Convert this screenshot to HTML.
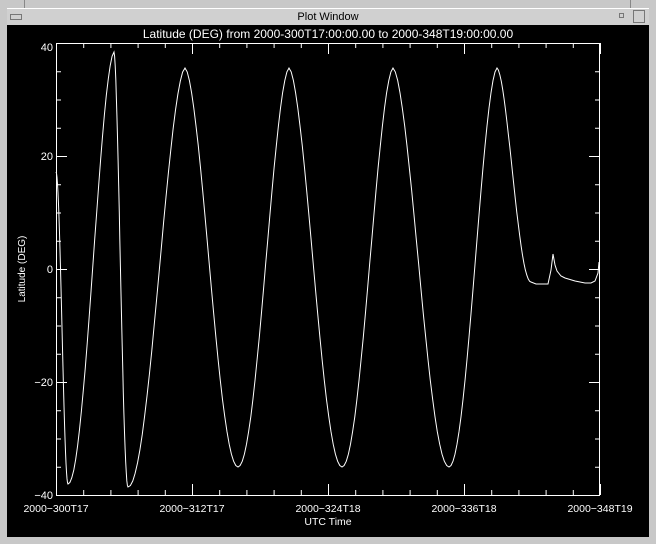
<!DOCTYPE html>
<html><head><meta charset="utf-8"><style>
body{margin:0;width:656px;height:544px;background:#c8c8c8;overflow:hidden;position:relative;font-family:"Liberation Sans",sans-serif}
.black{position:absolute;left:7px;top:25px;width:642px;height:512px;background:#000}
.tb{position:absolute;left:7px;top:8px;width:642px;height:16px;background:#d0d0d0;border-top:1px solid #fff;border-bottom:1px solid #888;font-size:11px;text-align:center;line-height:16px;color:#000}
svg{position:absolute;left:0;top:0}
</style></head><body>
<div class="tb">Plot Window</div>
<div style="position:absolute;left:24px;top:0;width:1px;height:8px;background:#888"></div>
<div style="position:absolute;left:630px;top:0;width:1px;height:8px;background:#888"></div>
<div style="position:absolute;left:10px;top:14px;width:10px;height:4px;border:1px solid #777"></div>
<div style="position:absolute;left:619px;top:13px;width:3px;height:3px;border:1px solid #777"></div>
<div style="position:absolute;left:633px;top:10px;width:10px;height:11px;border:1px solid #777"></div>
<div class="black"></div>
<svg width="656" height="544" id="s" font-family="Liberation Sans, sans-serif" font-size="11" fill="#fff">
<text x="328" y="38" text-anchor="middle" font-size="12">Latitude (DEG) from 2000-300T17:00:00.00 to 2000-348T19:00:00.00</text>
<rect x="56.5" y="43.5" width="543" height="452" fill="none" stroke="#fff"/>
<g id="ticks" stroke="#fff"></g>
<g text-anchor="end">
<text x="53" y="51">40</text><text x="53" y="160">20</text><text x="53" y="273">0</text><text x="53" y="386">−20</text><text x="53" y="499">−40</text>
</g>
<g text-anchor="middle" font-size="10.5">
<text x="56" y="512">2000−300T17</text><text x="192" y="512">2000−312T17</text><text x="328" y="512">2000−324T18</text><text x="464" y="512">2000−336T18</text><text x="600" y="512">2000−348T19</text>
<text x="328" y="525">UTC Time</text>
</g>
<text x="0" y="0" font-size="10" text-anchor="middle" transform="translate(25,269) rotate(-90)">Latitude (DEG)</text>
<path id="c" fill="none" stroke="#fff" stroke-width="1"/>
</svg>
<script>
var t='';
for(var i=0;i<=20;i++){var x=56.5+i*27.2;var L=(i%5==0)?11:5;t+='<line x1="'+x+'" y1="495" x2="'+x+'" y2="'+(495-L)+'"/><line x1="'+x+'" y1="43" x2="'+x+'" y2="'+(43+L)+'"/>';}
for(var j=0;j<=16;j++){var y=43.5+j*28.25;var L=(j%4==0)?11:5;t+='<line x1="56" y1="'+y+'" x2="'+(56+L)+'" y2="'+y+'"/><line x1="600" y1="'+y+'" x2="'+(600-L)+'" y2="'+y+'"/>';}
document.getElementById('ticks').innerHTML=t;
var e=[[56,172],[68,484],[114,52],[128,487],[185,68],[238,467],[289,68],[342,467],[393,68],[449,467],[497,68],[531,282]];
var d='M'+e[0][0]+' '+e[0][1];
for(var k=0;k<e.length-1;k++){var a=e[k],b=e[k+1];for(var s=1;s<=24;s++){var u=s/24;var f=(1-Math.cos(Math.PI*u))/2;
if(b[1]>a[1]&&k>0){f=Math.pow(f,0.85);} else if(b[1]<a[1]&&k>0){f=1-Math.pow(1-f,0.85);}
d+=' L'+(a[0]+(b[0]-a[0])*u).toFixed(1)+' '+(a[1]+(b[1]-a[1])*f).toFixed(1);}}
d+=' L536 284 L548 284 L551 270 L553 254 L555 265 L557 271 L561 276 L565 278 L575 281 L585 283 L591 283 L595 281 L598 273 L599 262';
document.getElementById('c').setAttribute('d',d);
</script>
</body></html>
